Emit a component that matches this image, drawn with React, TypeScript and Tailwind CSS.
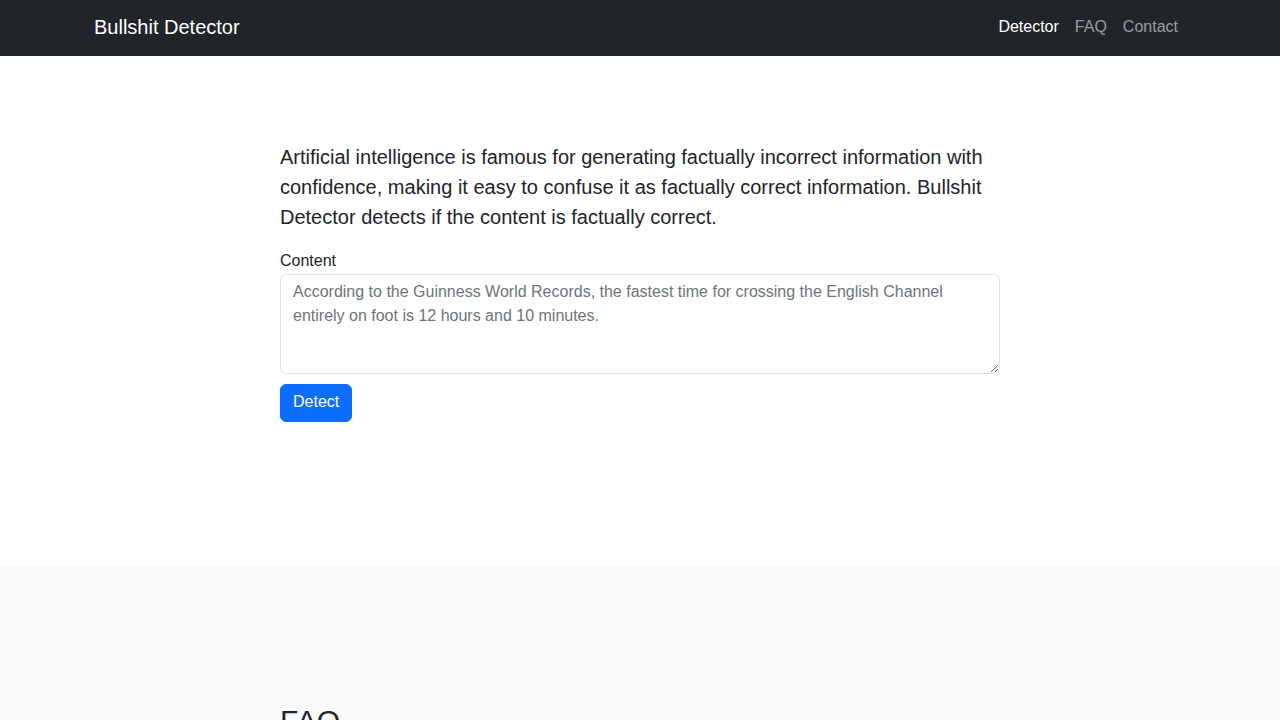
import React from "react";

export default function App() {
  return (
    <div className="min-h-screen bg-white text-[#212529]" style={{ fontFamily: '"Liberation Sans", Arial, sans-serif' }}>
      <nav className="bg-[#212529] h-[56px]">
        <div className="mx-auto max-w-[1140px] px-6 h-full flex items-center justify-between pb-[2px]">
          <a className="text-white text-[20px] leading-[30px]" href="#">Bullshit Detector</a>
          <div className="flex items-center text-[16px] leading-6">
            <a className="px-2 text-white" href="#">Detector</a>
            <a className="px-2 text-[rgba(255,255,255,0.55)]" href="#">FAQ</a>
            <a className="px-2 text-[rgba(255,255,255,0.55)]" href="#">Contact</a>
          </div>
        </div>
      </nav>
      <section className="h-[510px] pt-[86px]">
        <div className="mx-auto w-[720px]">
          <p className="text-[20px] leading-[30px] mb-[17px]">
            Artificial intelligence is famous for generating factually incorrect information with confidence, making it easy to confuse it as factually correct information. Bullshit Detector detects if the content is factually correct.
          </p>
          <label className="block text-[16px] leading-6 mb-[1px]">Content</label>
          <textarea
            className="block w-full h-[100px] border border-[#dee2e6] rounded-[6px] px-3 pt-[5px] pb-[7px] text-[16px] leading-6 placeholder:text-[#6c757d] outline-none"
            placeholder="According to the Guinness World Records, the fastest time for crossing the English Channel entirely on foot is 12 hours and 10 minutes."
          />
          <button className="mt-[10px] bg-[#0d6efd] border border-[#0d6efd] text-white rounded-[6px] px-3 pt-[5px] pb-[7px] h-[38px] text-[16px] leading-6">Detect</button>
        </div>
      </section>
      <section className="bg-[#f8f9fa] pt-[137px] pb-12">
        <div className="mx-auto w-[720px]">
          <h2 className="text-[30px] leading-[1.2] font-normal">FAQ</h2>
        </div>
      </section>
    </div>
  );
}
